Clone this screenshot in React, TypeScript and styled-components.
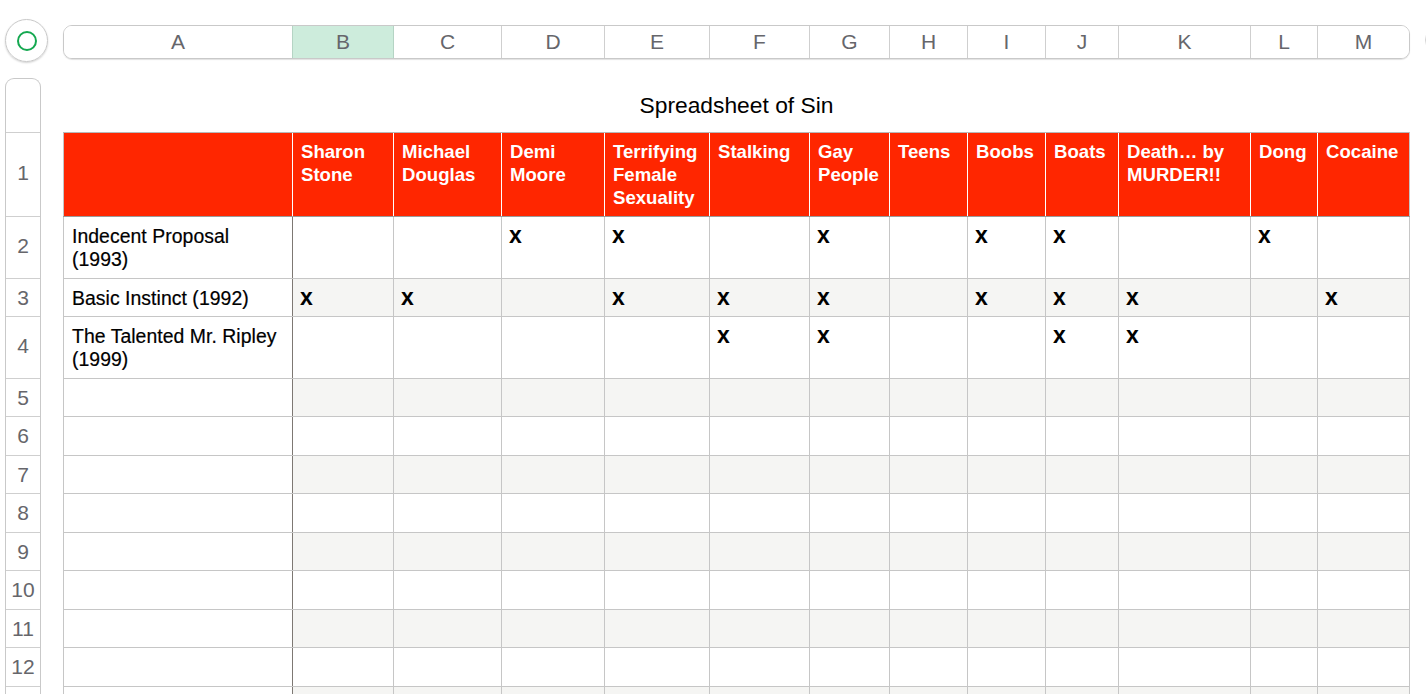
import styled, { createGlobalStyle } from "styled-components";

const COL_WIDTHS = [229, 101, 108, 103, 105, 100, 80, 78, 78, 73, 132, 67, 92];
const ROW_HEIGHTS = [84, 62, 38, 62, 38, 39, 38, 39, 38, 39, 38, 39, 39];
const ROW_NUMBER_HEIGHTS = ROW_HEIGHTS.slice(0, 12);

const LETTERS = ["A", "B", "C", "D", "E", "F", "G", "H", "I", "J", "K", "L", "M"];

const HEADERS = [
  "",
  "Sharon Stone",
  "Michael Douglas",
  "Demi Moore",
  "Terrifying Female Sexuality",
  "Stalking",
  "Gay People",
  "Teens",
  "Boobs",
  "Boats",
  "Death… by MURDER!!",
  "Dong",
  "Cocaine",
];

const MOVIES = [
  { title: "Indecent Proposal (1993)", marks: [3, 4, 6, 8, 9, 11] },
  { title: "Basic Instinct (1992)", marks: [1, 2, 4, 5, 6, 8, 9, 10, 12] },
  { title: "The Talented Mr. Ripley (1999)", marks: [5, 6, 9, 10] },
];

const GlobalStyle = createGlobalStyle`
  html, body {
    margin: 0;
    background: #fff;
    overflow: hidden;
  }
  body {
    font-family: "Liberation Sans", Arial, sans-serif;
  }
`;

const App = () => {
  const rows = ROW_HEIGHTS.slice(1).map((_, idx) => MOVIES[idx]);

  return (
    <Page>
      <GlobalStyle />
      <TopRow>
        <SelectAll>
          <GreenRing />
        </SelectAll>
        <ColumnBar>
          {LETTERS.map((letter, idx) => (
            <ColumnLabel key={letter} $width={COL_WIDTHS[idx]} $selected={letter === "B"}>
              {letter}
            </ColumnLabel>
          ))}
        </ColumnBar>
        <AddColumn />
      </TopRow>

      <Body>
        <RowRail>
          <RailCap />
          {ROW_NUMBER_HEIGHTS.map((h, idx) => (
            <RowNumber key={idx} $height={h}>
              {idx + 1}
            </RowNumber>
          ))}
          <RailRest />
        </RowRail>

        <Sheet>
          <Title>Spreadsheet of Sin</Title>
          <Table>
            <colgroup>
              {COL_WIDTHS.map((w, idx) => (
                <col key={idx} width={w} />
              ))}
            </colgroup>
            <thead>
              <tr>
                {HEADERS.map((label, idx) => (
                  <HeaderCell key={idx} $height={ROW_HEIGHTS[0]}>
                    {label}
                  </HeaderCell>
                ))}
              </tr>
            </thead>
            <tbody>
              {rows.map((movie, rowIdx) => (
                <tr key={rowIdx}>
                  <TitleCell $height={ROW_HEIGHTS[rowIdx + 1]}>{movie?.title}</TitleCell>
                  {LETTERS.slice(1).map((_, colIdx) => (
                    <MarkCell
                      key={colIdx}
                      $height={ROW_HEIGHTS[rowIdx + 1]}
                      $shaded={rowIdx % 2 === 1}
                    >
                      {movie?.marks.includes(colIdx + 1) ? "x" : ""}
                    </MarkCell>
                  ))}
                </tr>
              ))}
            </tbody>
          </Table>
        </Sheet>
      </Body>
    </Page>
  );
};

const Page = styled.div`
  width: 1426px;
  height: 694px;
  overflow: hidden;
  padding: 19px 0 0 5px;
  box-sizing: border-box;
  background: #fff;
`;

const TopRow = styled.div`
  display: flex;
  align-items: flex-start;
  height: 59px;
`;

const SelectAll = styled.div`
  width: 43px;
  height: 43px;
  box-sizing: border-box;
  border: 1px solid #c9c9c9;
  border-radius: 50%;
  box-shadow: 0 1px 2px rgba(0, 0, 0, 0.18);
  display: flex;
  align-items: center;
  justify-content: center;
  margin-right: 15px;
  flex-shrink: 0;
`;

const GreenRing = styled.div`
  width: 20px;
  height: 20px;
  box-sizing: border-box;
  border: 2px solid #14a850;
  border-radius: 50%;
`;

const ColumnBar = styled.div`
  display: flex;
  flex-shrink: 0;
  margin-top: 6px;
  width: 1347px;
  height: 34px;
  box-sizing: border-box;
  border: 1px solid #c9c9c9;
  border-radius: 9px;
  box-shadow: 0 1px 1px rgba(0, 0, 0, 0.12);
  overflow: hidden;
`;

const ColumnLabel = styled.div<{ $width: number; $selected: boolean }>`
  width: ${(p) => p.$width}px;
  flex-shrink: 0;
  box-sizing: border-box;
  display: flex;
  align-items: center;
  justify-content: center;
  padding-bottom: 1px;
  font-size: 21px;
  color: #66666b;
  background: ${(p) => (p.$selected ? "#cdecdc" : "#fff")};
  border-right: 1px solid ${(p) => (p.$selected ? "#b5d4c4" : "#cfcfcf")};

  &:first-child {
    border-right-color: #b5d4c4;
  }

  &:last-child {
    flex: 1;
    width: auto;
    border-right: none;
  }
`;

const AddColumn = styled.div`
  width: 30px;
  height: 30px;
  flex-shrink: 0;
  margin: 6px 0 0 15px;
  box-sizing: border-box;
  border: 1px solid #d2d2d2;
  border-radius: 50%;
`;

const Body = styled.div`
  display: flex;
  align-items: flex-start;
`;

const RowRail = styled.div`
  width: 36px;
  flex-shrink: 0;
  margin-right: 22px;
  box-sizing: border-box;
  border: 1px solid #c9c9c9;
  border-bottom: none;
  border-radius: 9px 9px 0 0;
  background: #fff;
`;

const RailCap = styled.div`
  height: 53px;
`;

const RowNumber = styled.div<{ $height: number }>`
  height: ${(p) => p.$height}px;
  box-sizing: border-box;
  border-top: 1px solid #cfcfcf;
  display: flex;
  align-items: center;
  justify-content: center;
  padding-bottom: ${(p) => (p.$height > 50 ? 3 : 0)}px;
  font-size: 21px;
  color: #66666b;
`;

const RailRest = styled.div`
  height: 60px;
  border-top: 1px solid #cfcfcf;
`;

const Sheet = styled.div`
  flex-shrink: 0;
`;

const Title = styled.div`
  height: 54px;
  box-sizing: border-box;
  padding-top: 14px;
  text-align: center;
  font-size: 22.8px;
  line-height: 26px;
  color: #000;
`;

const Table = styled.table`
  border-collapse: collapse;
  table-layout: fixed;
  width: 1346px;
  font-size: 19.4px;
  line-height: 23px;
`;

const HeaderCell = styled.th<{ $height: number }>`
  height: ${(p) => p.$height}px;
  box-sizing: border-box;
  padding: 7px 7px 0 8px;
  vertical-align: top;
  text-align: left;
  font-size: 18.6px;
  font-weight: 700;
  color: #fff;
  background: #ff2600;
  border-left: 1px solid #fff;
  border-top: 1px solid #b8b8b8;
  border-bottom: 1px solid #9b9b9b;

  &:first-child {
    border-left: 1px solid #c4c4c4;
  }

  &:last-child {
    border-right: 1px solid #c4c4c4;
  }
`;

const BodyCell = styled.td<{ $height: number }>`
  height: ${(p) => p.$height}px;
  box-sizing: border-box;
  padding: 8px 7px 0 8px;
  vertical-align: top;
  color: #000;
  border: 1px solid #c6c6c6;
`;

const TitleCell = styled(BodyCell)`
  background: #fff;
  font-weight: 400;
  letter-spacing: 0.05px;
  -webkit-text-stroke: 0.2px #000;
  border-right-color: #7d7873;
`;

const MarkCell = styled(BodyCell)<{ $shaded: boolean }>`
  background: ${(p) => (p.$shaded ? "#f5f5f3" : "#fff")};
  padding: 7px 7px 0;
  font-weight: 700;
  font-size: 23px;
`;

export default App;
